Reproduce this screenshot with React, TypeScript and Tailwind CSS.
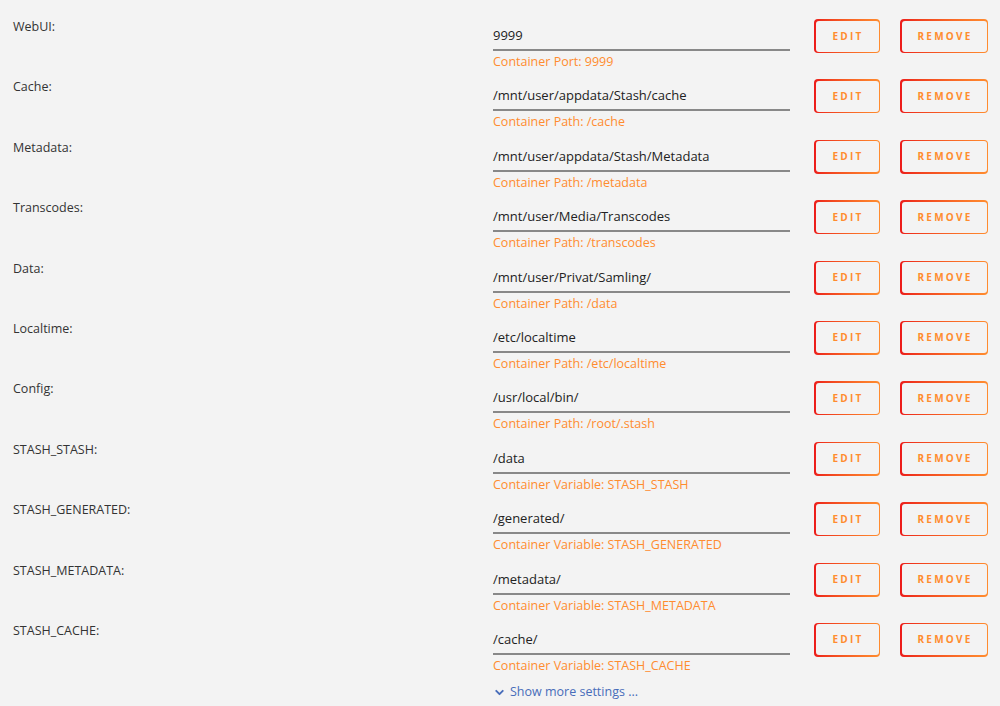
import React from 'react';
import { ChevronDown } from 'lucide-react';

const rows = [
  { label: 'WebUI:', value: '9999', hint: 'Container Port: 9999' },
  { label: 'Cache:', value: '/mnt/user/appdata/Stash/cache', hint: 'Container Path: /cache' },
  { label: 'Metadata:', value: '/mnt/user/appdata/Stash/Metadata', hint: 'Container Path: /metadata' },
  { label: 'Transcodes:', value: '/mnt/user/Media/Transcodes', hint: 'Container Path: /transcodes' },
  { label: 'Data:', value: '/mnt/user/Privat/Samling/', hint: 'Container Path: /data' },
  { label: 'Localtime:', value: '/etc/localtime', hint: 'Container Path: /etc/localtime' },
  { label: 'Config:', value: '/usr/local/bin/', hint: 'Container Path: /root/.stash' },
  { label: 'STASH_STASH:', value: '/data', hint: 'Container Variable: STASH_STASH' },
  { label: 'STASH_GENERATED:', value: '/generated/', hint: 'Container Variable: STASH_GENERATED' },
  { label: 'STASH_METADATA:', value: '/metadata/', hint: 'Container Variable: STASH_METADATA' },
  { label: 'STASH_CACHE:', value: '/cache/', hint: 'Container Variable: STASH_CACHE' },
];

function OutlineButton({ text, width }: { text: string; width: string }) {
  return (
    <div className={`${width} h-[34px] rounded-[4px] bg-gradient-to-r from-[#ec1a1a] to-[#ff8c2f] p-[1.5px]`}>
      <div className="w-full h-full rounded-[3px] bg-[#f3f3f3] flex items-center justify-center">
        <span className="text-[10px] font-bold tracking-[2.2px] text-[#ff8c2f] pl-[2px]">{text}</span>
      </div>
    </div>
  );
}

export default function App() {
  return (
    <div className="w-[1000px] h-[706px] bg-[#f3f3f3] pt-[12px] overflow-hidden text-[#333]" style={{ fontFamily: '"Open Sans", sans-serif' }}>
      {rows.map((row, idx) => (
        <div key={idx} className="flex h-[60.4px]">
          <div className="w-[480px] pl-[13px] pt-[8px] text-[12.5px] leading-[14px]">{row.label}</div>
          <div className="w-[310px] pl-[13px]">
            <div className="mt-[15px] h-[24px] border-b-2 border-[#888] text-[13px] leading-[16px] text-[#222]">
              {row.value}
            </div>
            <div className="mt-[4px] text-[12.5px] leading-[14px] text-[#ff8c2f]">{row.hint}</div>
          </div>
          <div className="pl-[24px] pt-[7px] flex gap-[20px]">
            <OutlineButton text="EDIT" width="w-[66px]" />
            <OutlineButton text="REMOVE" width="w-[88px]" />
          </div>
        </div>
      ))}
      <div className="pl-[493px] mt-[9px] flex items-center gap-[4px] text-[12.5px] leading-[14px] text-[#486dba]">
        <ChevronDown size={13} strokeWidth={3.5} />
        <span>Show more settings ...</span>
      </div>
    </div>
  );
}
